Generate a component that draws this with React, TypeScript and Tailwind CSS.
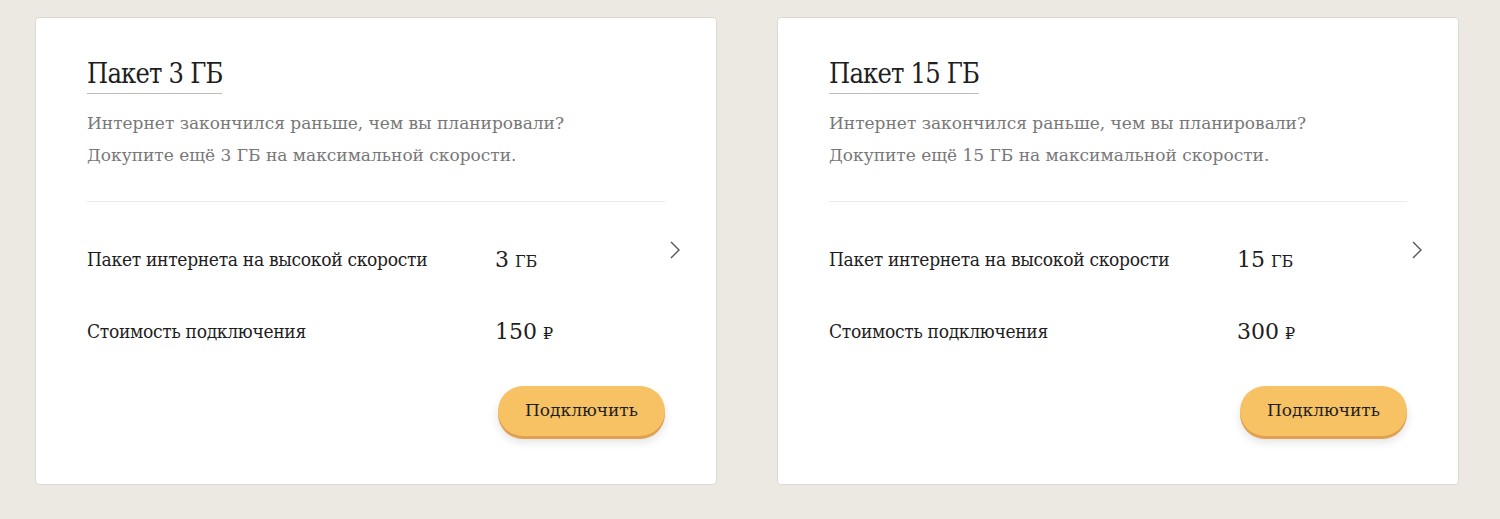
import React from 'react';

interface PackageCardProps {
  volume: string;
  price: string;
}

const font = { fontFamily: '"DejaVu Serif", "Liberation Serif", serif' };
const narrow = { fontFamily: '"DejaVu Serif Condensed", "DejaVu Serif", serif', fontStretch: 'condensed' };

const Chevron = () => (
  <svg width="14" height="20" viewBox="0 0 14 20" fill="none" className="text-[#555]">
    <path d="M3 2l8 8-8 8" stroke="currentColor" strokeWidth="1.4" />
  </svg>
);

const PackageCard: React.FC<PackageCardProps> = ({ volume, price }) => (
  <div className="flex-1 h-[468px] bg-white border border-[#dcd9d3] rounded-[4px] px-[51px] pt-[38px] relative">
    <h2
      className="inline-block text-[27px] leading-[36px] text-[#1e1e1e] border-b border-[#bdbdbd] pb-[1px] tracking-[-0.8px]"
      style={narrow}
    >
      Пакет {volume} ГБ
    </h2>
    <p className="mt-[13px] text-[17px] leading-[32px] text-[#787878]">
      Интернет закончился раньше, чем вы планировали?
      <br />
      Докупите ещё {volume} ГБ на максимальной скорости.
    </p>
    <div className="mt-[30px] border-t border-[#ebebeb]" />
    <div className="absolute right-[34px] top-[222px]">
      <Chevron />
    </div>
    <div className="grid grid-cols-[408px_1fr] items-center mt-[41px]">
      <span className="text-[19px] text-[#1e1e1e] tracking-[-0.3px]" style={narrow}>
        Пакет интернета на высокой скорости
      </span>
      <span className="text-[#1e1e1e]">
        <span className="text-[22px]">{volume}</span>
        <span className="text-[16px] ml-[6px]">ГБ</span>
      </span>
    </div>
    <div className="grid grid-cols-[408px_1fr] items-center mt-[39px]">
      <span className="text-[19px] text-[#1e1e1e] tracking-[-0.3px]" style={narrow}>
        Стоимость подключения
      </span>
      <span className="text-[#1e1e1e]">
        <span className="text-[22px]">{price}</span>
        <span className="text-[16px] ml-[6px]">₽</span>
      </span>
    </div>
    <div className="flex justify-end mt-[38px]">
      <button className="w-[167px] h-[50px] rounded-full bg-[#f6c264] text-[17px] text-[#1e1e1e] shadow-[0_3px_0_#e0a050,0_6px_10px_rgba(0,0,0,0.12)]">
        Подключить
      </button>
    </div>
  </div>
);

export default function App() {
  return (
    <div className="min-h-[519px] bg-[#ece9e3] flex items-start gap-[60px] pl-[35px] pr-[41px] pt-[17px]" style={font}>
      <PackageCard volume="3" price="150" />
      <PackageCard volume="15" price="300" />
    </div>
  );
}
